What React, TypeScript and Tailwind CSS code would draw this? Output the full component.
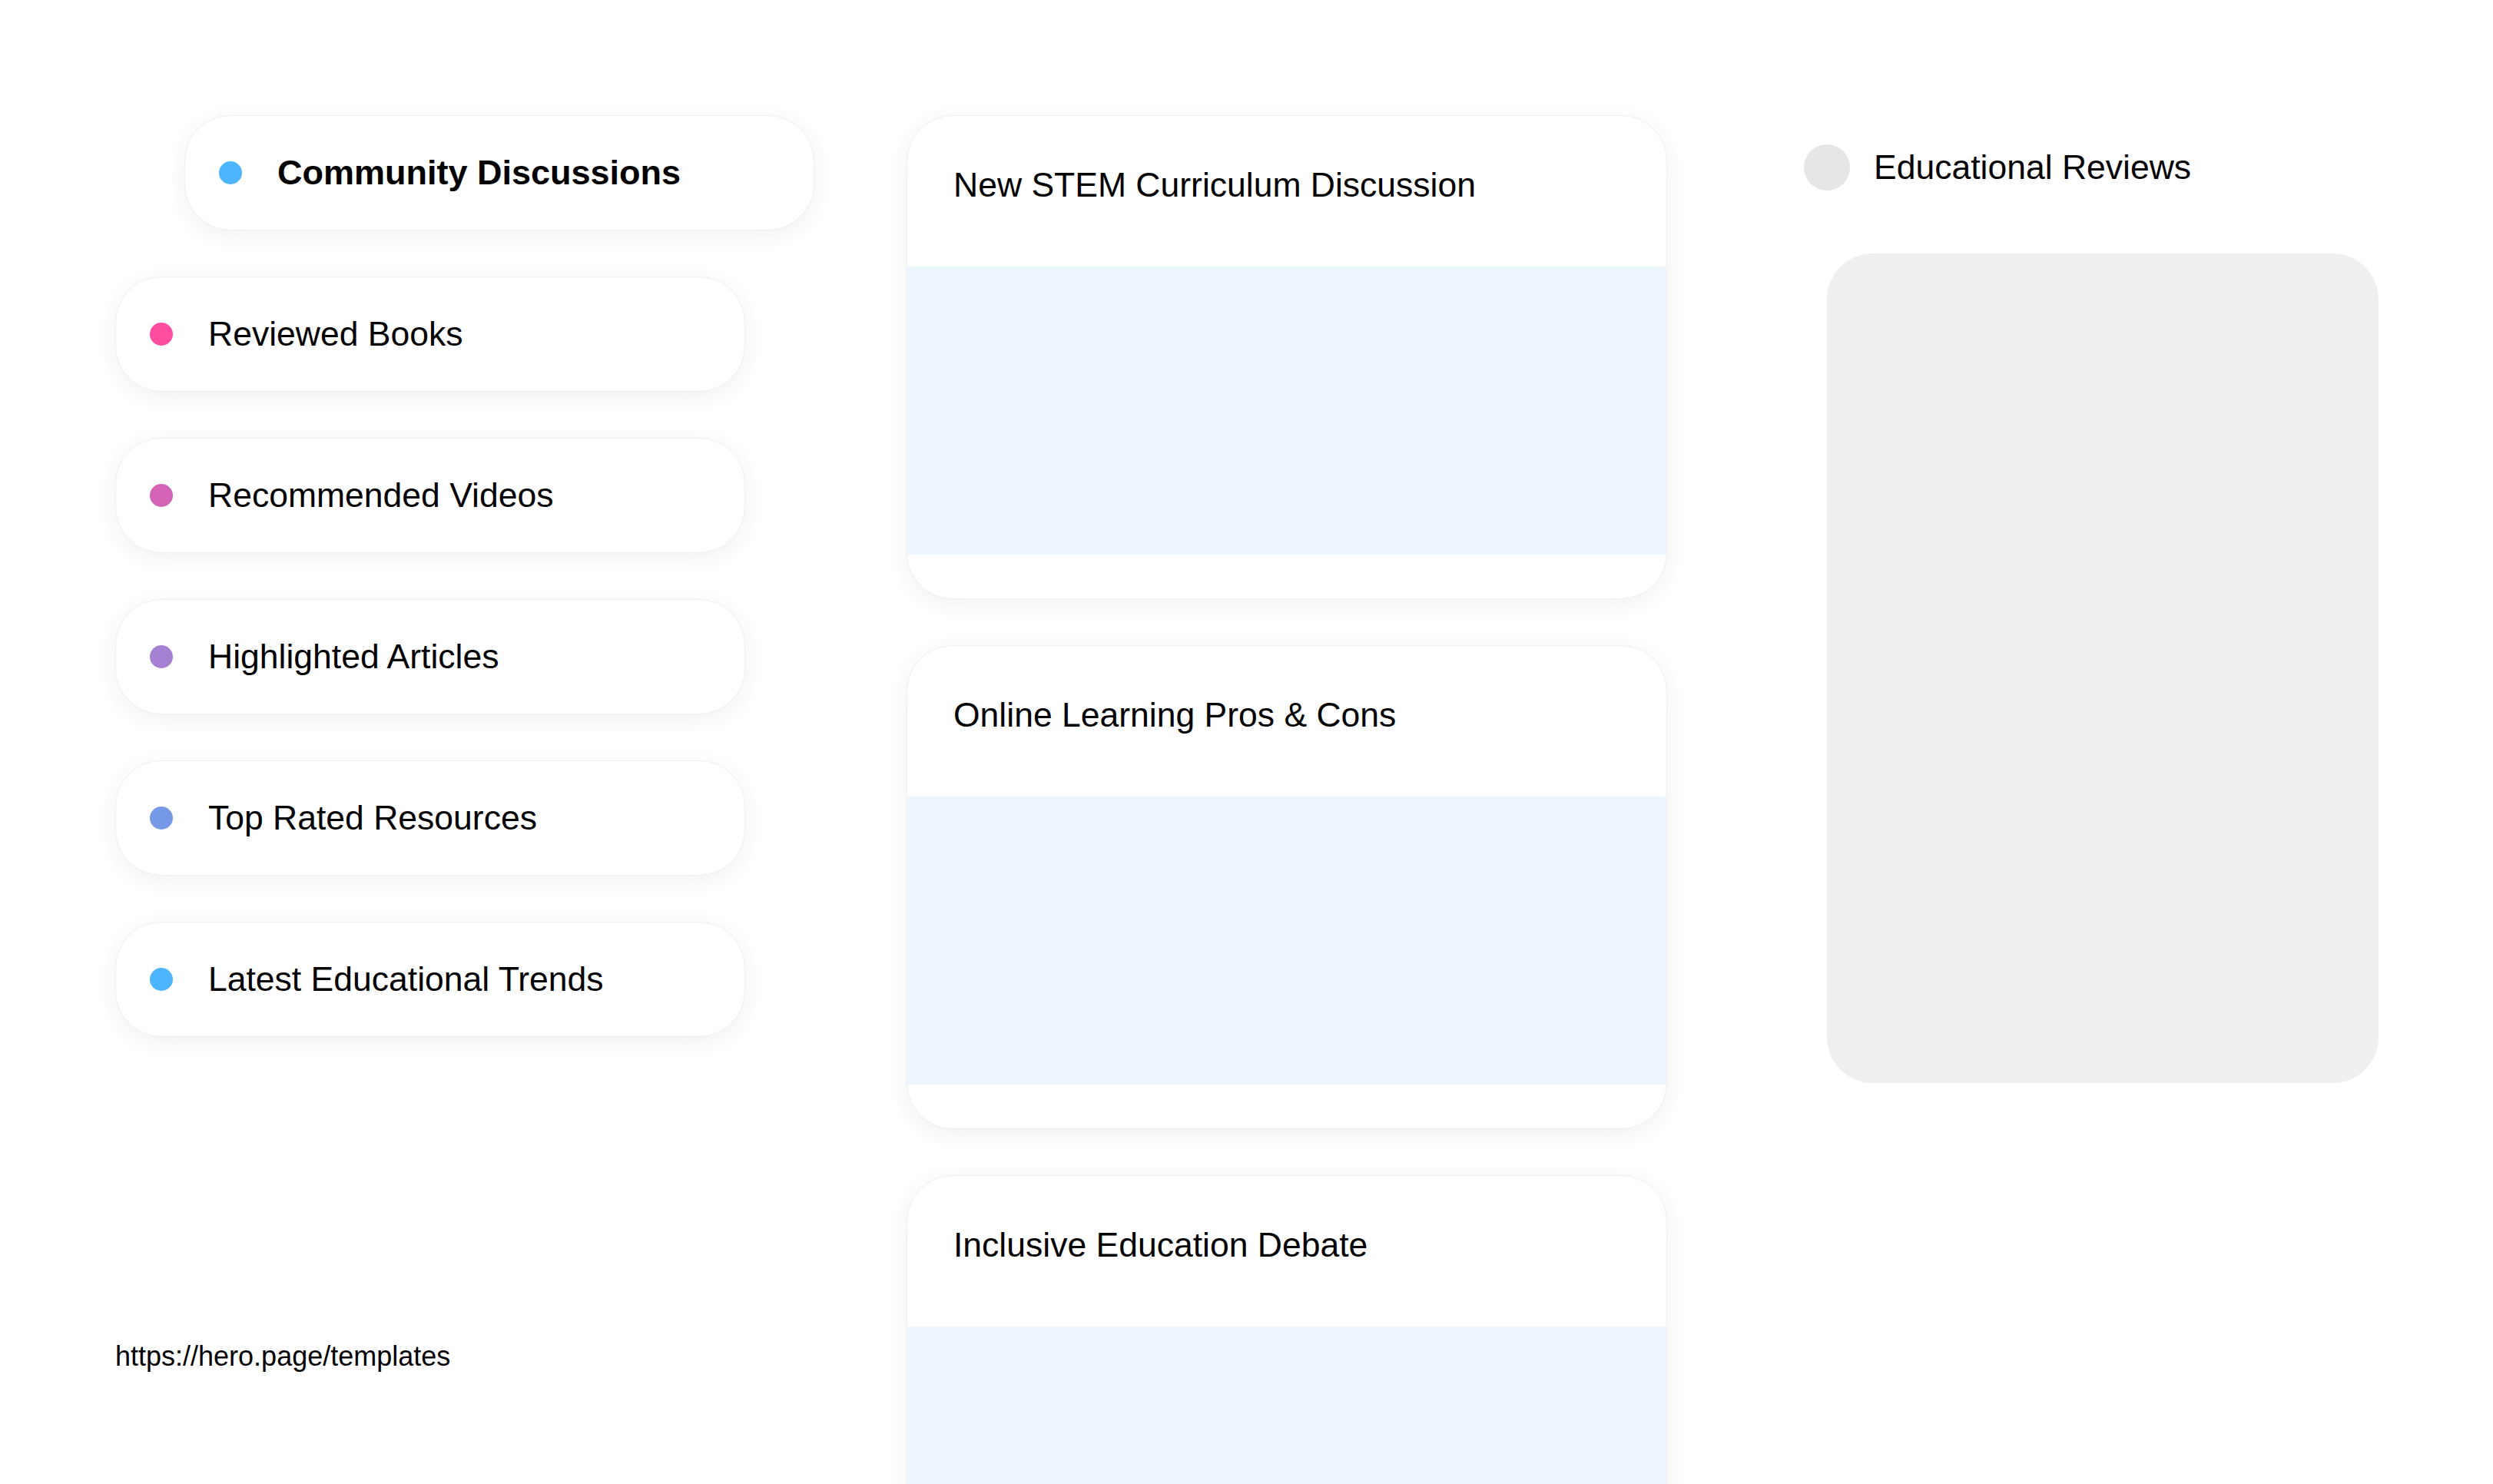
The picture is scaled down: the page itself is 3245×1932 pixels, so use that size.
import React from "react";

const NAV = [
  { label: "Community Discussions", dot: "bg-[#4db5ff]", active: true },
  { label: "Reviewed Books", dot: "bg-[#ff4d9f]" },
  { label: "Recommended Videos", dot: "bg-[#d463b6]" },
  { label: "Highlighted Articles", dot: "bg-[#a680d2]" },
  { label: "Top Rated Resources", dot: "bg-[#7599e6]" },
  { label: "Latest Educational Trends", dot: "bg-[#4db5ff]" },
];

const POSTS = [
  "New STEM Curriculum Discussion",
  "Online Learning Pros & Cons",
  "Inclusive Education Debate",
];

function NavPill({ label, dot, active }: { label: string; dot: string; active?: boolean }) {
  return (
    <div
      className={
        "flex h-[150px] w-[820px] items-center rounded-[60px] border border-[#efefef] bg-white pl-[44px] shadow-[0_6px_28px_rgba(0,0,0,0.06)] " +
        (active ? "translate-x-[90px]" : "")
      }
    >
      <span className={"h-[30px] w-[30px] shrink-0 rounded-full " + dot} />
      <span className={"ml-[46px] text-black " + (active ? "text-[45px] font-bold" : "text-[44.5px]")}>{label}</span>
    </div>
  );
}

function PostCard({ title }: { title: string }) {
  return (
    <div className="h-[630px] w-[990px] shrink-0 overflow-hidden rounded-[60px] border border-[#efefef] bg-white shadow-[0_6px_28px_rgba(0,0,0,0.06)]">
      <div className="h-[196px] px-[60px] pt-[64px] text-[44.5px] leading-[1.15] text-black">{title}</div>
      <div className="h-[375px] bg-[#edf6fe]" />
    </div>
  );
}

export default function App() {
  return (
    <div className="h-[1932px] overflow-hidden bg-white font-['Liberation_Sans',Arial,sans-serif]">
      <div className="flex pl-[150px] pt-[150px]">
        <div className="flex w-[820px] shrink-0 flex-col">
          <div className="flex flex-col gap-[60px]">
            {NAV.map((n) => (
              <NavPill key={n.label} {...n} />
            ))}
          </div>
          <p className="mt-[395px] text-[36px] leading-[1.15] text-black">https://hero.page/templates</p>
        </div>

        <div className="ml-[210px] flex shrink-0 flex-col gap-[60px]">
          {POSTS.map((t) => (
            <PostCard key={t} title={t} />
          ))}
        </div>

        <div className="ml-[178px] flex shrink-0 flex-col pt-[38px]">
          <div className="flex items-center">
            <span className="h-[60px] w-[60px] rounded-full bg-[#e6e6e6]" />
            <span className="ml-[31px] text-[44.5px] leading-[1.15] text-black">Educational Reviews</span>
          </div>
          <div className="ml-[30px] mt-[82px] h-[1080px] w-[718px] rounded-[60px] bg-[#efefef]" />
        </div>
      </div>
    </div>
  );
}
